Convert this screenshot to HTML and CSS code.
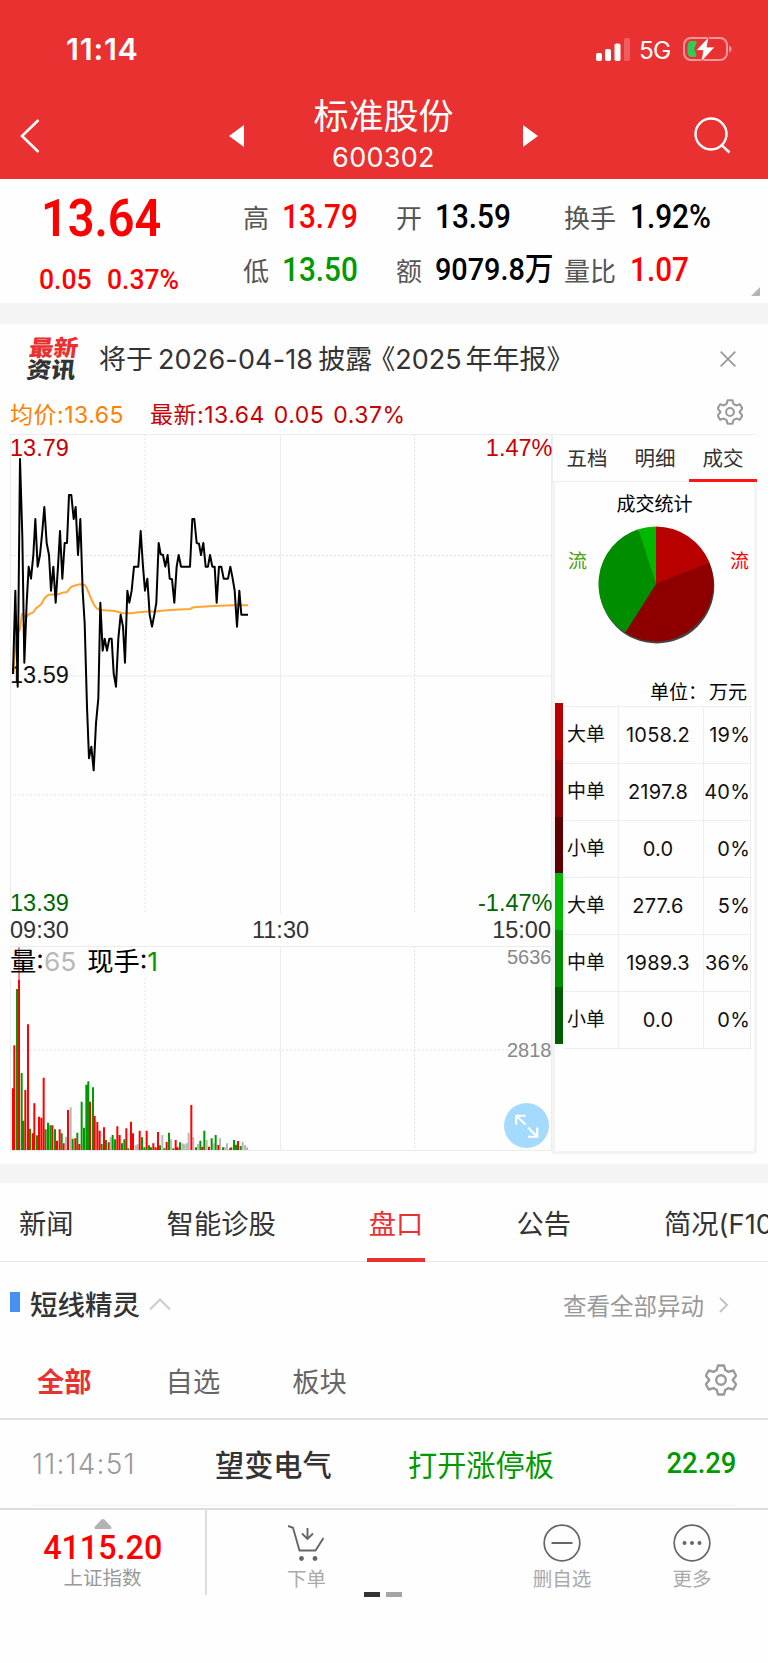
FILE: index.html
```html
<!DOCTYPE html>
<html lang="zh-CN">
  <head>
    <meta charset="UTF-8" />
    <meta name="viewport" content="width=device-width, initial-scale=1.0" />
    <title>标准股份 600302</title>
    <link rel="stylesheet" href="styles.css">
  </head>
  <body>
    <header class="header">
      <div class="status">
        <span class="status__time">11:14</span>
        <div class="status__right">
          <svg class="status__signal" viewBox="0 0 34 23" fill="#fff">
            <rect x="0" y="15" width="6" height="8" rx="1.8" />
            <rect x="9" y="11" width="6" height="12" rx="1.8" />
            <rect x="18.500" y="5.500" width="6" height="17.500" rx="1.800" />
            <rect x="28" y="0" width="6" height="23" rx="1.800" opacity=".22" />
          </svg>
          <span class="status__net">5G</span>
          <svg class="status__battery" viewBox="0 0 49 26">
            <rect x="1" y="2" width="43" height="22" rx="7" fill="none" stroke="#f49a9a" stroke-width="2" />
            <path d="M46 9.500c3.500 1.500 3.500 5.500 0 7z" fill="#f49a9a" />
            <path d="M8.500 5h4.500c2 3-1.500 4.500-1.500 8s3.500 5 1 8H9c-3 0-4.500-2-4.500-5v-6c0-3 1.500-5 4-5z" fill="#34c759" />
            <path d="M26 .500 13 14.500h7l-2 11.500L32 11h-8z" fill="#fff" stroke="#ea3131" stroke-width=".8" />
          </svg>
        </div>
      </div>
      <nav class="nav">
        <svg class="nav__back" viewBox="0 0 20 34" fill="none" stroke="#fff" stroke-width="2.600">
          <path d="M18.500 1 2 17l16.500 16" />
        </svg>
        <svg class="nav__arrow" viewBox="0 0 15 22" fill="#fff"><path d="M15 0v22L0 11z" /></svg>
        <div class="nav__title">
          <h1 class="nav__name">标准股份</h1>
          <span class="nav__code">600302</span>
        </div>
        <svg class="nav__arrow" viewBox="0 0 15 22" fill="#fff"><path d="M0 0v22l15-11z" /></svg>
        <svg class="nav__search" viewBox="0 0 37 37" fill="none" stroke="#fff" stroke-width="2.400">
          <circle cx="17" cy="17" r="15.500" />
          <path d="m27.500 28 8 7.500" />
        </svg>
      </nav>
    </header>

    <section class="quote">
      <div class="quote__main">
        <span class="quote__price num">13.64</span>
        <div class="quote__change">
          <span class="num">0.05</span>
          <span class="num">0.37%</span>
        </div>
      </div>
      <dl class="quote__grid">
        <dt>高</dt><dd class="num up">13.79</dd>
        <dt>开</dt><dd class="num">13.59</dd>
        <dt>换手</dt><dd class="num">1.92%</dd>
        <dt>低</dt><dd class="num down">13.50</dd>
        <dt>额</dt><dd class="num num--amount">9079.8万</dd>
        <dt>量比</dt><dd class="num up">1.07</dd>
      </dl>
      <svg class="quote__corner" viewBox="0 0 9 9"><path d="M9 0v9H0z" fill="#b5b5b5" /></svg>
    </section>

    <section class="news">
      <div class="news__logo"><span class="news__logo-top">最新</span><span>资讯</span></div>
      <p class="news__text">将于<span class="news__num news__num--date">2026-04-18</span>披露<span class="news__quote">《</span><span class="news__num">2025</span>年年报》</p>
      <svg class="news__close" viewBox="0 0 16 16" stroke="#999" stroke-width="1.800"><path d="m.700.700 14.600 14.600M15.300.700.700 15.300" /></svg>
    </section>

    <div class="legend">
      <span class="legend__avg">均价:13.65</span>
      <span class="legend__last">最新:13.64<i>0.05</i><i>0.37%</i></span>
      <svg class="legend__gear" viewBox="0 0 32 32" fill="none" stroke="#999" stroke-width="2.500" stroke-linejoin="round">
        <path d="M13 1.500h6l1.200 4.500 3.300 1.900 4.700-1.400 3 5.200-3.500 4.300 3.500 4.300-3 5.200-4.700-1.400-3.300 1.900L19 30.500h-6l-1.200-4.500-3.300-1.900-4.700 1.400-3-5.200L4.300 16 .800 11.700l3-5.200 4.700 1.400L11.800 6z" />
        <circle cx="16" cy="16" r="4.800" />
      </svg>
    </div>

    <section class="board">
      <div class="charts">
        <svg class="chart chart--price" viewBox="0 0 542 480">
          <path class="grid" d="M0 .500H542M0 242H542M.500 0V480M270.500 0V480M541.500 0V480" />
          <path class="grid grid--dot" d="M0 121.500H542M0 361H542M135 0V480M404.500 0V480" />
          <text class="label label--up" x="0" y="22">13.79</text>
          <text class="label label--up" x="542.500" y="22" text-anchor="end">1.47%</text>
          <text class="label label--mid" x="0" y="249">13.59</text>
          <text class="label label--down" x="0" y="476.500">13.39</text>
          <text class="label label--down" x="542.500" y="476.500" text-anchor="end">-1.47%</text>
          <g transform="scale(.33333) translate(-30 -42)">
            <polyline class="line line--avg" points="40,762 46,680 53,640 60,628 66,582 73,588 80,590 86,583 100,577 107,566 120,556 126,549 132,537 140,528 148,524 175,523 187,518 201,516 214,500 228,496 240,493 254,495 260,503 270,528 282,555 290,565 300,570 345,573 365,579 395,580 415,577 435,575 470,574 510,570 570,567 580,562 640,558 700,556 744,556" />
            <polyline class="line" points="39,762 46,512 53,800 60,117 67,350 73,728 80,550 86,440 93,476 100,405 106,297 113,440 120,405 127,333 133,261 140,369 147,405 153,512 160,440 167,548 174,440 180,333 187,476 194,369 201,369 207,225 214,225 221,297 227,261 234,405 241,297 248,512 254,610 261,860 267,1015 274,980 281,1051 288,910 295,835 301,548 308,692 314,656 321,692 328,656 335,656 341,760 348,800 355,656 362,584 369,620 375,728 382,512 388,548 395,512 402,440 415,440 422,333 429,440 435,512 442,476 449,584 456,620 463,584 469,548 476,369 482,403 489,405 496,440 503,405 509,476 516,478 523,548 530,440 536,405 543,440 570,440 577,297 583,297 590,369 597,371 603,405 610,369 617,440 624,440 630,405 637,440 644,440 650,548 657,440 664,440 671,476 684,476 691,440 698,476 704,512 711,620 718,512 724,584 744,584" />
          </g>
        </svg>
        <div class="times"><span>09:30</span><span>11:30</span><span>15:00</span></div>
        <div class="volume">
          <svg class="chart chart--volume" viewBox="0 0 542 205">
            <path class="grid" d="M0 .500H542M0 204.500H542M.500 0V205M270.500 0V205M541.500 0V205" />
            <path class="grid grid--dot" d="M0 104H542M135 0V205M404.500 0V205" />
            <text class="label label--vol" x="541.500" y="17.500" text-anchor="end">5636</text>
            <text class="label label--vol" x="541.500" y="111" text-anchor="end">2818</text>
            <g class="bars" transform="scale(.33333) translate(-30 -168)">
              <path stroke="#b9b9b9" d="M198 780V740M212 780V652M332 780V742M407 780V766M413 780V763M487 780V735M513 780V748M547 780V760M553 780V763M560 780V760M566 780V728M580 780V742M594 780V762M620 780V750M641 780V760M660 780V745M675 780V772M681 780V760M728 780V755M735 780V765M741 780V772" />
              <path stroke="#009900" d="M51 780V297M65 780V549M70 780V692M90 780V716M111 780V736M137 780V718M144 780V698M151 780V706M165 780V718M185 780V730M218 780V746M232 780V728M245 780V635M252 780V713M259 780V584M265 780V574M279 780V592M305 780V762M318 780V750M338 780V735M345 780V748M366 780V760M373 780V748M385 780V775M426 780V742M433 780V772M447 780V766M453 780V772M480 780V766M493 780V775M507 780V728M520 780V775M540 780V757M588 780V772M601 780V752M613 780V722M635 780V745M647 780V735M669 780V772M694 780V772M702 780V750M708 780V764M722 780V768" />
              <path stroke="#ff0000" d="M39 780V595M43 780V466M57 780V172M76 780V600M84 780V403M98 780V730M103 780V640M117 780V680M124 780V683M131 780V563M157 780V706M171 780V752M179 780V718M191 780V760M204 780V660M226 780V745M238 780V762M270 780V635M284 780V678M292 780V696M299 780V722M312 780V712M326 780V757M352 780V709M359 780V735M379 780V715M393 780V695M399 780V730M419 780V722M440 780V722M460 780V760M467 780V772M474 780V726M500 780V756M527 780V750M533 780V772M574 780V645M607 780V770M627 780V770M655 780V765M690 780V775M714 780V753" />
            </g>
          </svg>
          <div class="volume__legend">量:<span class="volume__qty">65</span>现手:<span class="volume__now">1</span></div>
          <button class="volume__expand" aria-label="展开">
            <svg viewBox="0 0 46 46" fill="none" stroke="#fff" stroke-width="2.200">
              <path d="M22 22 13 13.500M12.500 22v-9H22M24.500 25l9 9M34 25v9.500h-9.500" />
            </svg>
          </button>
        </div>
      </div>

      <aside class="deals">
        <div class="deals__tabs">
          <span>五档</span>
          <span>明细</span>
          <span class="is-active">成交</span>
        </div>
        <div class="deals__body">
          <h2 class="deals__heading">成交统计</h2>
          <div class="deals__pie">
            <span class="deals__flow deals__flow--out">流</span>
            <svg class="pie" viewBox="-59 -59 118 119">
              <circle cx=".800" cy="2" r="57.500" fill="#444" />
              <path fill="#b80000" d="M0 0V-57.500A57.500 57.500 0 0 1 53.460 -21.170z" />
              <path fill="#8e0000" d="M0 0 53.460 -21.170A57.500 57.500 0 0 1 -30.810 48.550z" />
              <path fill="#008e00" d="M0 0-30.810 48.550A57.500 57.500 0 0 1 -17.770 -54.690z" />
              <path fill="#00b800" d="M0 0-17.770 -54.690A57.500 57.500 0 0 1 0 -57.500z" />
            </svg>
            <span class="deals__flow deals__flow--in">流</span>
          </div>
          <p class="deals__unit"><span>单位：</span><span>万元</span></p>
          <div class="deals__list">
            <div class="deals__bar">
              <i class="bar-1"></i><i class="bar-2"></i><i class="bar-3"></i><i class="bar-4"></i><i class="bar-5"></i><i class="bar-6"></i>
            </div>
            <div class="deals__table">
              <div class="deals__row"><span>大单</span><span>1058.2</span><span>19%</span></div>
              <div class="deals__row"><span>中单</span><span>2197.8</span><span>40%</span></div>
              <div class="deals__row"><span>小单</span><span>0.0</span><span>0%</span></div>
              <div class="deals__row"><span>大单</span><span>277.6</span><span>5%</span></div>
              <div class="deals__row"><span>中单</span><span>1989.3</span><span>36%</span></div>
              <div class="deals__row"><span>小单</span><span>0.0</span><span>0%</span></div>
            </div>
          </div>
        </div>
      </aside>
    </section>

    <nav class="tabs">
      <span class="tabs__item">新闻</span>
      <span class="tabs__item">智能诊股</span>
      <span class="tabs__item tabs__item--active">盘口</span>
      <span class="tabs__item">公告</span>
      <span class="tabs__item">简况(F10</span>
    </nav>

    <section class="alerts">
      <div class="alerts__head">
        <i class="alerts__mark"></i>
        <h2 class="alerts__heading">短线精灵</h2>
        <svg class="alerts__up" viewBox="0 0 22 12" fill="none" stroke="#ccc" stroke-width="2"><path d="M1 11.500 11 1.500l10 10" /></svg>
        <a class="alerts__more">查看全部异动</a>
        <svg class="alerts__next" viewBox="0 0 10 16" fill="none" stroke="#c4c4c4" stroke-width="2"><path d="m1 1 7 7-7 7" /></svg>
      </div>
      <div class="filters">
        <span class="filters__item filters__item--active">全部</span>
        <span class="filters__item">自选</span>
        <span class="filters__item">板块</span>
        <svg class="filters__gear" viewBox="0 0 32 32" fill="none" stroke="#999" stroke-width="2.400" stroke-linejoin="round">
          <path d="M13 1.500h6l1.200 4.500 3.300 1.900 4.700-1.400 3 5.200-3.500 4.300 3.500 4.300-3 5.200-4.700-1.400-3.300 1.900L19 30.500h-6l-1.200-4.500-3.300-1.900-4.700 1.400-3-5.200L4.300 16 .800 11.700l3-5.200 4.700 1.400L11.800 6z" />
          <circle cx="16" cy="16" r="4.800" />
        </svg>
      </div>
      <div class="alert">
        <span class="alert__time">11:14:51</span>
        <span class="alert__name">望变电气</span>
        <span class="alert__event">打开涨停板</span>
        <span class="alert__price num">22.29</span>
      </div>
    </section>

    <footer class="toolbar">
      <div class="toolbar__index">
        <svg class="toolbar__caret" viewBox="0 0 18 10"><path d="M9 0q1.500 0 3 2l5 5.500q1.500 2.500-1 2.500H2q-2.500 0-1-2.500L6 2q1.500-2 3-2z" fill="#b3b3b3" /></svg>
        <span class="toolbar__value num">4115.20</span>
        <span class="toolbar__label toolbar__label--dark">上证指数</span>
      </div>
      <div class="toolbar__item toolbar__item--order">
        <svg class="toolbar__icon" viewBox="0 0 38 38" fill="none" stroke="#666" stroke-width="1.900">
          <path d="M0 2l5 1.800 6.500 22.700h16L35.500 14M19.500 4v10.500M14 9.500l5.500 5.500 5.500-5.500" />
          <circle cx="13.500" cy="34.500" r="2.400" fill="#666" stroke="none" />
          <circle cx="27" cy="34.500" r="2.400" fill="#666" stroke="none" />
        </svg>
        <span class="toolbar__label">下单</span>
      </div>
      <div class="toolbar__item toolbar__item--remove">
        <svg class="toolbar__icon" viewBox="0 0 38 38" fill="none" stroke="#666" stroke-width="1.700">
          <circle cx="19" cy="19" r="17.800" />
          <path d="M8.500 19h21" stroke-width="2" />
        </svg>
        <span class="toolbar__label">删自选</span>
      </div>
      <div class="toolbar__item toolbar__item--more">
        <svg class="toolbar__icon" viewBox="0 0 38 38" fill="none" stroke="#666" stroke-width="1.700">
          <circle cx="19" cy="19" r="17.800" />
          <g fill="#666" stroke="none">
            <circle cx="11.500" cy="19" r="2" />
            <circle cx="19" cy="19" r="2" />
            <circle cx="26.500" cy="19" r="2" />
          </g>
        </svg>
        <span class="toolbar__label">更多</span>
      </div>
      <div class="pager"><i class="is-on"></i><i></i></div>
    </footer>
  </body>
</html>
```

FILE: styles.css
```css
* {
  margin: 0;
  padding: 0;
  box-sizing: border-box;
}
body {
  width: 768px;
  height: 1663px;
  overflow: hidden;
  background-color: #fefefe;
  color: #333;
  font-family: "Inter", "Noto Sans CJK SC", sans-serif;
  white-space: nowrap;
}
svg {
  display: block;
  flex: none;
}
i {
  font-style: normal;
}
h1,
h2 {
  font-weight: 400;
}
.num {
  font-family: "Roboto", "Noto Sans CJK SC", sans-serif;
  font-weight: 500;
  transform: scaleX(0.9);
  transform-origin: left center;
}
.up {
  color: #ff0000;
}
.down {
  color: #009900;
}

/* header */
.header {
  height: 179px;
  background-color: #ea3131;
  color: #fff;
}
.status {
  display: flex;
  justify-content: space-between;
  height: 96px;
  padding: 31px 36px 0 66px;
}
.status__time {
  font-size: 30.5px;
  line-height: 36px;
  font-weight: 600;
  letter-spacing: 0.8px;
}
.status__right {
  display: flex;
  align-items: flex-start;
}
.status__signal {
  width: 34px;
  height: 23px;
  margin-top: 7px;
}
.status__net {
  width: 33px;
  margin: 4px 11px 0 9px;
  font-size: 24.5px;
  line-height: 30px;
  letter-spacing: -0.8px;
}
.status__battery {
  width: 49px;
  height: 26px;
  margin-top: 5px;
}
.nav {
  display: flex;
  align-items: flex-start;
  padding: 0 36px 0 20px;
}
.nav__back {
  width: 20px;
  height: 34px;
  margin: 23px 189px 0 0;
}
.nav__arrow {
  width: 15px;
  height: 22px;
  margin-top: 29px;
}
.nav__title {
  display: flex;
  flex-direction: column;
  align-items: center;
  width: 279px;
}
.nav__name {
  font-size: 35px;
  line-height: 40px;
}
.nav__code {
  margin-top: 6px;
  font-size: 27px;
  line-height: 32px;
  letter-spacing: 0.3px;
}
.nav__search {
  width: 37px;
  height: 37px;
  margin: 21px 0 0 156px;
}

/* quote */
.quote {
  position: relative;
  display: flex;
  height: 145px;
  border-bottom: 21px solid #f4f4f4;
}
.quote__main {
  width: 243px;
  padding: 12px 0 0 41px;
  color: #ff0000;
}
.quote__price {
  display: block;
  font-size: 52px;
  line-height: 56px;
  font-weight: 600;
}
.quote__change {
  display: flex;
  margin: 16px 0 0 -2px;
  font-size: 28.5px;
  line-height: 34px;
}
.quote__change .num {
  width: 68px;
  transform: scaleX(0.93);
}
.quote__grid {
  display: grid;
  grid-template-columns: 39px 114px 39px 129px 66px 100px;
  grid-auto-rows: 53px;
  align-items: center;
  padding-top: 11px;
}
.quote__grid dt {
  font-size: 26px;
  line-height: 53px;
  padding-top: 4px;
  color: #555;
}
.quote__grid dd {
  font-size: 33px;
  line-height: 53px;
}
.quote__grid dd:not(.up):not(.down) {
  color: #000;
}
.quote__grid .num--amount {
  font-size: 32px;
}
.quote__corner {
  position: absolute;
  right: 8px;
  bottom: 7px;
  width: 9px;
  height: 9px;
}

/* news */
.news {
  display: flex;
  align-items: center;
  height: 70px;
  padding: 0 32px 0 28px;
}
.news__logo {
  display: flex;
  flex-direction: column;
  width: 71px;
  font-size: 24.5px;
  line-height: 24px;
  font-weight: 900;
  transform: skewX(-7deg) scaleY(0.92);
}
.news__logo-top {
  color: #ea3131;
}
.news__text {
  flex: 1;
  padding-top: 1px;
  font-size: 27px;
  line-height: 36px;
}
.news__num {
  margin: 0 4px 0 0;
}
.news__num--date {
  margin: 0 5px 0 5px;
  letter-spacing: 0.15px;
}
.news__quote {
  margin-left: -4px;
}
.news__close {
  width: 16px;
  height: 16px;
}

/* legend */
.legend {
  display: flex;
  height: 40px;
  padding: 4px 25px 0 10px;
  font-size: 23px;
  line-height: 34px;
  letter-spacing: 0.5px;
}
.legend__avg {
  width: 140px;
  color: #ff8000;
}
.legend__last {
  flex: 1;
  color: #c80000;
}
.legend__last i {
  margin-left: 9px;
}
.legend__gear {
  width: 26px;
  height: 26px;
  margin-top: 1px;
}

/* charts */
.board {
  display: flex;
  height: 749px;
  padding: 0 11px 0 10px;
  border-bottom: 19px solid #f4f4f4;
}
.charts {
  width: 542px;
}
.chart {
  width: 542px;
  overflow: visible;
}
.chart--price {
  height: 480px;
}
.chart--volume {
  height: 205px;
}
.grid {
  fill: none;
  stroke: #ececec;
}
.grid--dot {
  stroke: #e2e2e2;
  stroke-dasharray: 2 2;
}
.line {
  fill: none;
  stroke: #000;
  stroke-width: 6;
  stroke-linejoin: round;
}
.line--avg {
  stroke: #ffa530;
}
.label {
  font-family: "Liberation Sans", sans-serif;
  font-size: 23.5px;
}
.label--mid {
  fill: #111;
}
.label--up {
  fill: #c80000;
}
.label--down {
  fill: #006600;
}
.label--vol {
  font-size: 20px;
  fill: #888;
}
.times {
  display: flex;
  justify-content: space-between;
  width: 541px;
  height: 32px;
  font-family: "Liberation Sans", sans-serif;
  font-size: 23.5px;
  line-height: 33px;
}
.volume {
  position: relative;
}
.bars path {
  stroke-width: 6;
}
.volume__legend {
  position: absolute;
  top: 1px;
  left: 0;
  height: 33px;
  font-size: 26.3px;
  line-height: 30px;
  color: #000;
  background-color: rgba(254, 254, 254, 0.5);
}
.volume__qty {
  margin-right: 11px;
  color: #b9b9b9;
}
.volume__now {
  color: #009900;
}
.volume__expand {
  position: absolute;
  right: 3px;
  bottom: 3px;
  width: 45px;
  height: 45px;
  border: none;
  border-radius: 50%;
  background-color: #a4dafe;
}

/* deals */
.deals {
  width: 205px;
  height: 720px;
}
.deals__tabs {
  display: flex;
  height: 48px;
  border: 1px solid #eee;
  border-right: none;
}
.deals__tabs span {
  flex: 1;
  padding-top: 1px;
  font-size: 20.5px;
  line-height: 46px;
  text-align: center;
}
.deals__tabs .is-active {
  height: 47px;
  border-bottom: 3px solid #ff1515;
}
.deals__body {
  height: 672px;
  border: 3px solid #f3f3f3;
  border-top: none;
}
.deals__heading {
  padding-top: 8px;
  font-size: 19px;
  line-height: 30px;
  text-align: center;
  color: #000;
}
.deals__pie {
  display: flex;
  justify-content: space-between;
  height: 163px;
  padding: 5px 5px 0 13px;
}
.deals__flow {
  margin-top: 23px;
  font-size: 19px;
  line-height: 28px;
}
.deals__flow--out {
  color: #4ba00f;
}
.deals__flow--in {
  color: #ff0000;
}
.pie {
  width: 118px;
  height: 119px;
  margin-left: -5px;
}
.deals__unit {
  display: flex;
  justify-content: flex-end;
  gap: 2px;
  padding-right: 7px;
  font-size: 19px;
  line-height: 20px;
  color: #000;
}
.deals__list {
  display: flex;
}
.deals__bar {
  display: flex;
  flex-direction: column;
  width: 8px;
  height: 341px;
}
.deals__bar i {
  flex: 1;
}
.bar-1 {
  background-color: #b80000;
}
.bar-2 {
  background-color: #8e0000;
}
.bar-3 {
  background-color: #5c0000;
}
.bar-4 {
  background-color: #00b800;
}
.bar-5 {
  background-color: #008e00;
}
.bar-6 {
  background-color: #005c00;
}
.deals__table {
  margin-top: 3px;
  border-top: 1px solid #eee;
  border-right: 1px solid #eee;
}
.deals__row {
  display: grid;
  grid-template-columns: 56px 85px 46px;
  height: 57px;
  border-bottom: 1px solid #eee;
  font-size: 20px;
  line-height: 56px;
  color: #111;
}
.deals__row span {
  border-right: 1px solid #eee;
  text-align: center;
  letter-spacing: 0.2px;
}
.deals__row span:nth-child(2) {
  padding-right: 6px;
}
.deals__row span:first-child {
  padding-left: 4px;
  font-size: 19px;
  text-align: left;
  letter-spacing: 0;
}
.deals__row span:last-child {
  border-right: none;
  text-align: right;
}

/* tabs */
.tabs {
  display: flex;
  height: 79px;
  padding-left: 19px;
  border-bottom: 1px solid #e8e8e8;
  font-size: 27.3px;
  line-height: 83px;
}
.tabs__item {
  margin-right: 93px;
}
.tabs__item--active {
  height: 79px;
  margin: 0 91px 0 -2px;
  padding: 0 2px;
  border-bottom: 4px solid #ea3131;
  color: #ea3131;
}

/* alerts */
.alerts__head {
  display: flex;
  align-items: center;
  height: 86px;
  padding: 0 39px 0 10px;
}
.alerts__mark {
  width: 10px;
  height: 20px;
  margin: -7px 10px 0 0;
  background-color: #4690ef;
}
.alerts__heading {
  font-size: 27.5px;
  line-height: 40px;
  font-weight: 500;
}
.alerts__up {
  width: 22px;
  height: 12px;
  margin: -3px auto 0 9px;
}
.alerts__more {
  font-size: 23.5px;
  color: #999;
}
.alerts__next {
  width: 10px;
  height: 16px;
  margin-left: 15px;
}
.filters {
  display: flex;
  align-items: center;
  height: 72px;
  padding: 0 31px 6px 37px;
  border-bottom: 2px solid #e2e2e2;
  font-size: 27.3px;
  color: #666;
}
.filters__item {
  margin-right: 72px;
}
.filters__item--active {
  margin-right: 74px;
  font-weight: 700;
  color: #ea3131;
}
.filters__gear {
  width: 32px;
  height: 32px;
  margin-left: auto;
}
.alert {
  display: flex;
  align-items: center;
  height: 86px;
  margin: 0 32px;
  border-bottom: 1px solid #f2f2f2;
  font-size: 29.2px;
}
.alert__time {
  width: 183px;
  padding-top: 3px;
  font-size: 28px;
  font-weight: 300;
  letter-spacing: 1.2px;
  color: #999;
}
.alert__name {
  width: 193px;
  font-weight: 500;
}
.alert__event {
  color: #009900;
}
.alert__price {
  margin-left: auto;
  transform: scaleX(0.94);
  transform-origin: right center;
  color: #009900;
}

/* toolbar */
.toolbar {
  position: relative;
  display: flex;
  height: 155px;
  margin-top: 2px;
  border-top: 2px solid #ddd;
}
.toolbar__index {
  display: flex;
  flex-direction: column;
  align-items: center;
  width: 207px;
  height: 85px;
  padding-top: 9px;
  border-right: 2px solid #ddd;
}
.toolbar__caret {
  width: 18px;
  height: 10px;
}
.toolbar__value {
  margin-bottom: -4px;
  font-size: 34px;
  line-height: 36px;
  transform: scaleX(0.95);
  transform-origin: center;
  color: #ff0000;
}
.toolbar__item {
  display: flex;
  flex-direction: column;
  align-items: center;
  padding-top: 14px;
}
.toolbar__item--order {
  width: 199px;
}
.toolbar__item--remove {
  width: 110px;
  margin-left: 101px;
}
.toolbar__item--more {
  width: 150px;
}
.toolbar__icon {
  width: 38px;
  height: 38px;
}
.toolbar__label {
  margin-top: 3px;
  font-size: 19.5px;
  line-height: 28px;
  color: #aaa;
}
.toolbar__label--dark {
  color: #999;
}
.pager {
  position: absolute;
  top: 82px;
  left: 364px;
  display: flex;
  gap: 6px;
}
.pager i {
  width: 16px;
  height: 5px;
  background-color: #a5a5a5;
}
.pager .is-on {
  background-color: #333;
}
```
